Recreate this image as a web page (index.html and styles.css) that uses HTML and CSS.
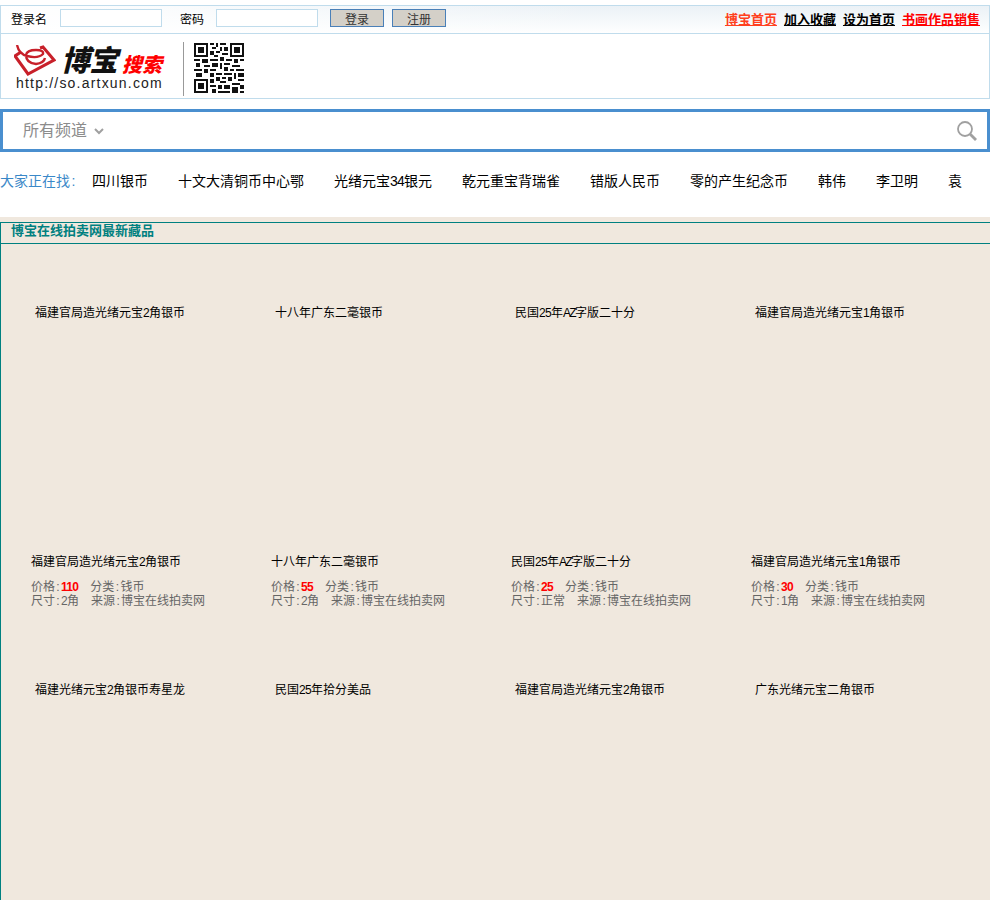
FILE: index.html
```html
<!DOCTYPE html>
<html lang="zh">
<head>
<meta charset="utf-8">
<title>博宝搜索</title>
<link rel="stylesheet" href="styles.css">
</head>
<body>
<div class="top">
  <div class="loginbar">
    <form class="login">
      <label class="lbl">登录名</label><input class="field" type="text">
      <label class="lbl pw">密码</label><input class="field" type="text">
      <button class="btn first" type="button">登录</button><button class="btn" type="button">注册</button>
    </form>
    <nav class="links">
      <a class="orange" href="#">博宝首页</a><a href="#">加入收藏</a><a href="#">设为首页</a><a class="red" href="#">书画作品销售</a>
    </nav>
  </div>
  <div class="brand">
    <div class="logo">
      <svg class="mark" width="42" height="31" viewBox="0 0 42 31"><path d="M26 3 L29 2 L40 15 L14 29 L1 11 L7 7" fill="none" stroke="#c8202a" stroke-width="3" stroke-linejoin="miter"/><path d="M3 0 Q5 9 13 11 Q24 14 29 9 Q30 5 22 5 Q13 5 12 10 Q12 18 22 19 Q30 18 31 13" fill="none" stroke="#c8202a" stroke-width="2.4"/></svg>
      <span class="bobao">博宝</span><span class="sousuo">搜索</span>
      <span class="url">http://so.artxun.com</span>
    </div>
    <svg class="qr" width="50" height="50" viewBox="0 0 25 25" shape-rendering="crispEdges"><path fill="#111" d="M0 0h7v7H0zM1 1v5h5V1zM2 2h3v3H2zM18 0h7v7h-7zM19 1v5h5V1zM20 2h3v3h-3zM0 18h7v7H0zM1 19v5h5v-5zM2 20h3v3H2zM8 0h2v1H8zM11 0h1v2h-1zM13 0h3v1h-3zM9 2h2v1H9zM13 2h1v2h-1zM15 2h2v2h-2zM8 4h2v2H8zM11 4h2v1h-2zM14 5h3v1h-3zM10 6h2v1h-2zM0 8h3v1H0zM4 8h3v2H4zM8 8h4v1H8zM13 7h2v2h-2zM16 8h3v1h-3zM20 8h2v2h-2zM23 8h2v1h-2zM1 10h2v2H1zM5 11h3v1H5zM9 10h3v2H9zM13 10h1v3h-1zM15 10h3v1h-3zM19 11h4v1h-4zM0 13h4v1H0zM5 13h2v2H5zM8 13h3v1H8zM15 12h2v2h-2zM18 13h2v1h-2zM21 13h4v1h-4zM1 15h3v2H1zM8 15h2v2H8zM11 15h3v1h-3zM15 15h4v1h-4zM20 15h1v3h-1zM22 15h3v2h-3zM11 17h2v2h-2zM14 17h2v1h-2zM17 17h2v2h-2zM8 18h2v2H8zM22 18h3v1h-3zM13 19h3v1h-3zM19 20h4v1h-4zM8 21h3v1H8zM12 21h2v2h-2zM15 21h3v2h-3zM23 21h2v2h-2zM9 23h2v2H9zM19 22h3v3h-3zM12 24h6v1h-6zM23 24h2v1h-2z"/></svg>
  </div>
</div>
<div class="search">
  <span class="channel">所有频道<svg class="chev" width="10" height="7" viewBox="0 0 10 7"><path d="M1 1l4 4 4-4" fill="none" stroke="#a0a0a0" stroke-width="2"/></svg></span>
  <svg class="glass" width="20" height="20" viewBox="0 0 20 20"><circle cx="8" cy="8" r="7" fill="none" stroke="#a0a0a0" stroke-width="1.8"/><path d="M13 13l6 6" stroke="#a0a0a0" stroke-width="2.8"/></svg>
</div>
<div class="hot">
  <span class="hotlabel">大家正在找<span class="c">:</span></span>
  <a href="#">四川银币</a><a href="#">十文大清铜币中心鄂</a><a href="#">光绪元宝<span class="a">34</span>银元</a><a href="#">乾元重宝背瑞雀</a><a href="#">错版人民币</a><a href="#">零的产生纪念币</a><a href="#">韩伟</a><a href="#">李卫明</a><a href="#">袁</a>
</div>
<main class="panel">
  <h2 class="ptitle">博宝在线拍卖网最新藏品</h2>
  <div class="row r1">
    <a class="name" href="#">福建官局造光绪元宝<span class="a">2</span>角银币</a><a class="name" href="#">十八年广东二毫银币</a><a class="name" href="#">民国<span class="a">25</span>年<span class="u">AZ</span>字版二十分</a><a class="name" href="#">福建官局造光绪元宝<span class="a">1</span>角银币</a>
  </div>
  <div class="row r2">
    <div class="item"><a class="iname" href="#">福建官局造光绪元宝<span class="a">2</span>角银币</a><p class="meta">价格<span class="c">:</span><b class="a">110</b><span class="gap"></span>分类<span class="c">:</span>钱币<br>尺寸<span class="c">:</span><span class="a">2</span>角<span class="gap"></span>来源<span class="c">:</span>博宝在线拍卖网</p></div>
    <div class="item"><a class="iname" href="#">十八年广东二毫银币</a><p class="meta">价格<span class="c">:</span><b class="a">55</b><span class="gap"></span>分类<span class="c">:</span>钱币<br>尺寸<span class="c">:</span><span class="a">2</span>角<span class="gap"></span>来源<span class="c">:</span>博宝在线拍卖网</p></div>
    <div class="item"><a class="iname" href="#">民国<span class="a">25</span>年<span class="u">AZ</span>字版二十分</a><p class="meta">价格<span class="c">:</span><b class="a">25</b><span class="gap"></span>分类<span class="c">:</span>钱币<br>尺寸<span class="c">:</span>正常<span class="gap"></span>来源<span class="c">:</span>博宝在线拍卖网</p></div>
    <div class="item"><a class="iname" href="#">福建官局造光绪元宝<span class="a">1</span>角银币</a><p class="meta">价格<span class="c">:</span><b class="a">30</b><span class="gap"></span>分类<span class="c">:</span>钱币<br>尺寸<span class="c">:</span><span class="a">1</span>角<span class="gap"></span>来源<span class="c">:</span>博宝在线拍卖网</p></div>
  </div>
  <div class="row r3">
    <a class="name" href="#">福建光绪元宝<span class="a">2</span>角银币寿星龙</a><a class="name" href="#">民国<span class="a">25</span>年拾分美品</a><a class="name" href="#">福建官局造光绪元宝<span class="a">2</span>角银币</a><a class="name" href="#">广东光绪元宝二角银币</a>
  </div>
</main>
</body>
</html>
```
FILE: styles.css
```css
html, body { margin: 0; padding: 0; height: 900px; overflow: hidden; background: #fff; }
body { font-family: "Liberation Sans", "Noto Sans CJK SC", sans-serif; font-size: 12px; color: #000; padding-top: 5px; box-sizing: border-box; }
a { color: inherit; text-decoration: none; }
.a { letter-spacing: -.056em; }
.u { letter-spacing: -.14em; }
.c { letter-spacing: .111em; padding-left: .111em; }

.top { border: 1px solid #c0dcec; height: 94px; box-sizing: border-box; display: flex; flex-direction: column; }
.loginbar { height: 28px; box-sizing: border-box; flex: none; border-bottom: 1px solid #c0dcec; display: flex; justify-content: space-between; align-items: center; background: linear-gradient(90deg, #fff 0, rgba(255,255,255,0) 60%), linear-gradient(#ebf1f6, #fafcfd 80%, #fff); }
.login { display: flex; align-items: center; padding: 0 0 3px 10px; }
.lbl { width: 49px; }
.pw { width: 36px; margin-left: 18px; }
.field { width: 102px; height: 18px; box-sizing: border-box; border: 1px solid #c0dcec; background: #fff; padding: 0; margin: 0; }
.btn { width: 54px; height: 18px; box-sizing: border-box; border: 1px solid #4a80b8; background: #d4d0c8; color: #333; font: 12px "Liberation Sans", "Noto Sans CJK SC", sans-serif; padding: 0; margin: 0 0 0 8px; }
.first { margin-left: 12px; }
.links { display: flex; gap: 7px; padding: 0 9px 2px 0; font-weight: 700; font-size: 13px; }
.links a { text-decoration: underline; }
.orange { color: #ff4020; }
.red { color: #f00; }

.brand { flex: 1; display: flex; align-items: flex-start; padding-top: 8px; }
.logo { position: relative; width: 169px; height: 54px; margin-left: 13px; border-right: 1px solid #999; }
.mark { position: absolute; left: 0; top: 3px; }
.bobao { position: absolute; left: 47px; top: 2px; font-size: 29px; line-height: 35px; font-weight: 900; font-style: italic; color: #111; letter-spacing: -1px; white-space: nowrap; }
.sousuo { position: absolute; left: 108px; top: 10px; font-size: 20px; line-height: 26px; font-weight: 900; font-style: italic; color: #f00; white-space: nowrap; }
.url { position: absolute; left: 2px; top: 33px; font-size: 14px; line-height: 16px; color: #222; letter-spacing: 1.2px; white-space: nowrap; }
.qr { margin: 1px 0 0 10px; }

.search { height: 43px; box-sizing: border-box; margin-top: 10px; border: 3px solid #4a8fcf; display: flex; align-items: center; justify-content: space-between; padding: 0 10px 0 20px; }
.channel { color: #8c8c8c; font-size: 16px; display: flex; align-items: center; gap: 7px; margin-bottom: 4px; }
.chev { margin-top: 5px; }

.hot { height: 65px; box-sizing: border-box; padding-bottom: 9px; display: flex; align-items: center; font-size: 14px; white-space: nowrap; overflow: hidden; }
.hotlabel { color: #3a88c8; width: 92px; flex: none; }
.hot a { margin-right: 30px; flex: none; }

.panel { background: #f0e8de; padding-top: 5px; height: 683px; box-sizing: border-box; }
.ptitle { margin: 0; height: 22px; box-sizing: border-box; border-top: 1px solid #008080; border-bottom: 1px solid #008080; border-left: 1px solid #008080; padding-left: 10px; font-size: 13px; font-weight: 700; line-height: 16px; color: #008080; }
.row { display: grid; grid-template-columns: repeat(4, 240px); border-left: 1px solid #008080; box-sizing: border-box; }
.r1 { height: 307px; padding: 61px 0 0 34px; align-items: start; }
.r2 { height: 131px; padding: 0 0 0 30px; }
.r3 { height: 223px; padding: 0 0 0 34px; align-items: start; }
.name, .iname { display: block; line-height: 16px; }
.iname { padding-top: 3px; }
.meta { margin: 10px 0 0; line-height: 14px; color: #666; white-space: nowrap; }
.meta b { color: #f00; font-weight: 700; }
.gap { display: inline-block; width: 12px; height: 0; }
```
